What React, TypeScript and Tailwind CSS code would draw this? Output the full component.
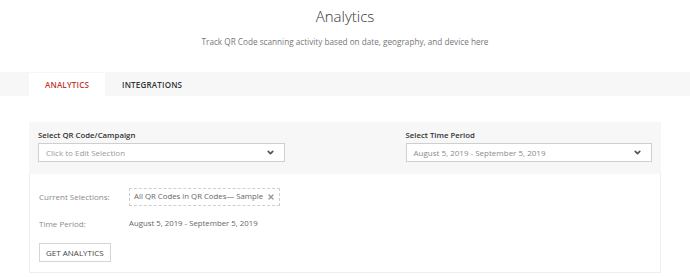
import { ChevronDown, X } from 'lucide-react';

const font = { fontFamily: '"Open Sans", "Liberation Sans", sans-serif' };

const Select = ({ value, muted }: { value: string; muted?: boolean }) => (
  <div className="flex h-[19px] items-center justify-between border border-[#cfcfcf] bg-white pl-[7px] pr-[9px]">
    <span className={`text-[8px] ${muted ? 'text-[#9a9a9a]' : 'text-[#8a8a8a]'}`}>{value}</span>
    <ChevronDown size={9} strokeWidth={4.5} className="text-[#555]" />
  </div>
);

export default function App() {
  return (
    <div className="w-[690px] h-[277px] bg-white overflow-hidden" style={font}>
      <div className="flex flex-col items-center pt-[5px]">
        <h1 className="text-[15px] font-light leading-[22px] text-[#333]">Analytics</h1>
        <p className="mt-[9px] text-[8.2px] leading-[12px] text-[#777]">
          Track QR Code scanning activity based on date, geography, and device here
        </p>
      </div>

      <div className="mt-[24px] flex h-[24px] items-end bg-[#f7f7f7] pl-[29px]">
        <div className="flex h-[23px] w-[76px] items-center justify-center bg-white text-[8px] font-semibold tracking-[0.2px] text-[#c0392b]">
          ANALYTICS
        </div>
        <div className="flex h-[23px] items-center pl-[17px] text-[8px] font-semibold tracking-[0.2px] text-[#333]">
          INTEGRATIONS
        </div>
      </div>

      <div className="mx-[29px] mt-[26px] w-[632px]">
        <div className="grid grid-cols-2 gap-[121px] bg-[#f7f7f7] px-[9px] pt-[7px] pb-[12px]">
          <div>
            <div className="mb-[2px] text-[7.8px] font-semibold leading-[12px] text-[#333]">Select QR Code/Campaign</div>
            <Select value="Click to Edit Selection" muted />
          </div>
          <div>
            <div className="mb-[2px] text-[7.8px] font-semibold leading-[12px] text-[#333]">Select Time Period</div>
            <Select value="August 5, 2019 - September 5, 2019" />
          </div>
        </div>

        <div className="h-[99px] border border-t-0 border-[#eeeeee] px-[9px] pt-[14px]">
          <div className="flex items-center">
            <span className="w-[90px] text-[8px] text-[#8a8a8a]">Current Selections:</span>
            <span className="flex h-[18px] items-center gap-[4px] border border-dashed border-[#cfcfcf] px-[4px] text-[7.8px] text-[#666]">
              All QR Codes in QR Codes— Sample
              <X size={8} strokeWidth={4} className="text-[#999]" />
            </span>
          </div>
          <div className="mt-[12px] flex items-center">
            <span className="w-[90px] text-[8px] text-[#8a8a8a]">Time Period:</span>
            <span className="text-[7.8px] text-[#666]">August 5, 2019 - September 5, 2019</span>
          </div>
          <button className="mt-[13px] flex h-[19px] items-center border border-[#d5d5d5] bg-white px-[6px] text-[8px] text-[#444]">
            GET ANALYTICS
          </button>
        </div>
      </div>
    </div>
  );
}
